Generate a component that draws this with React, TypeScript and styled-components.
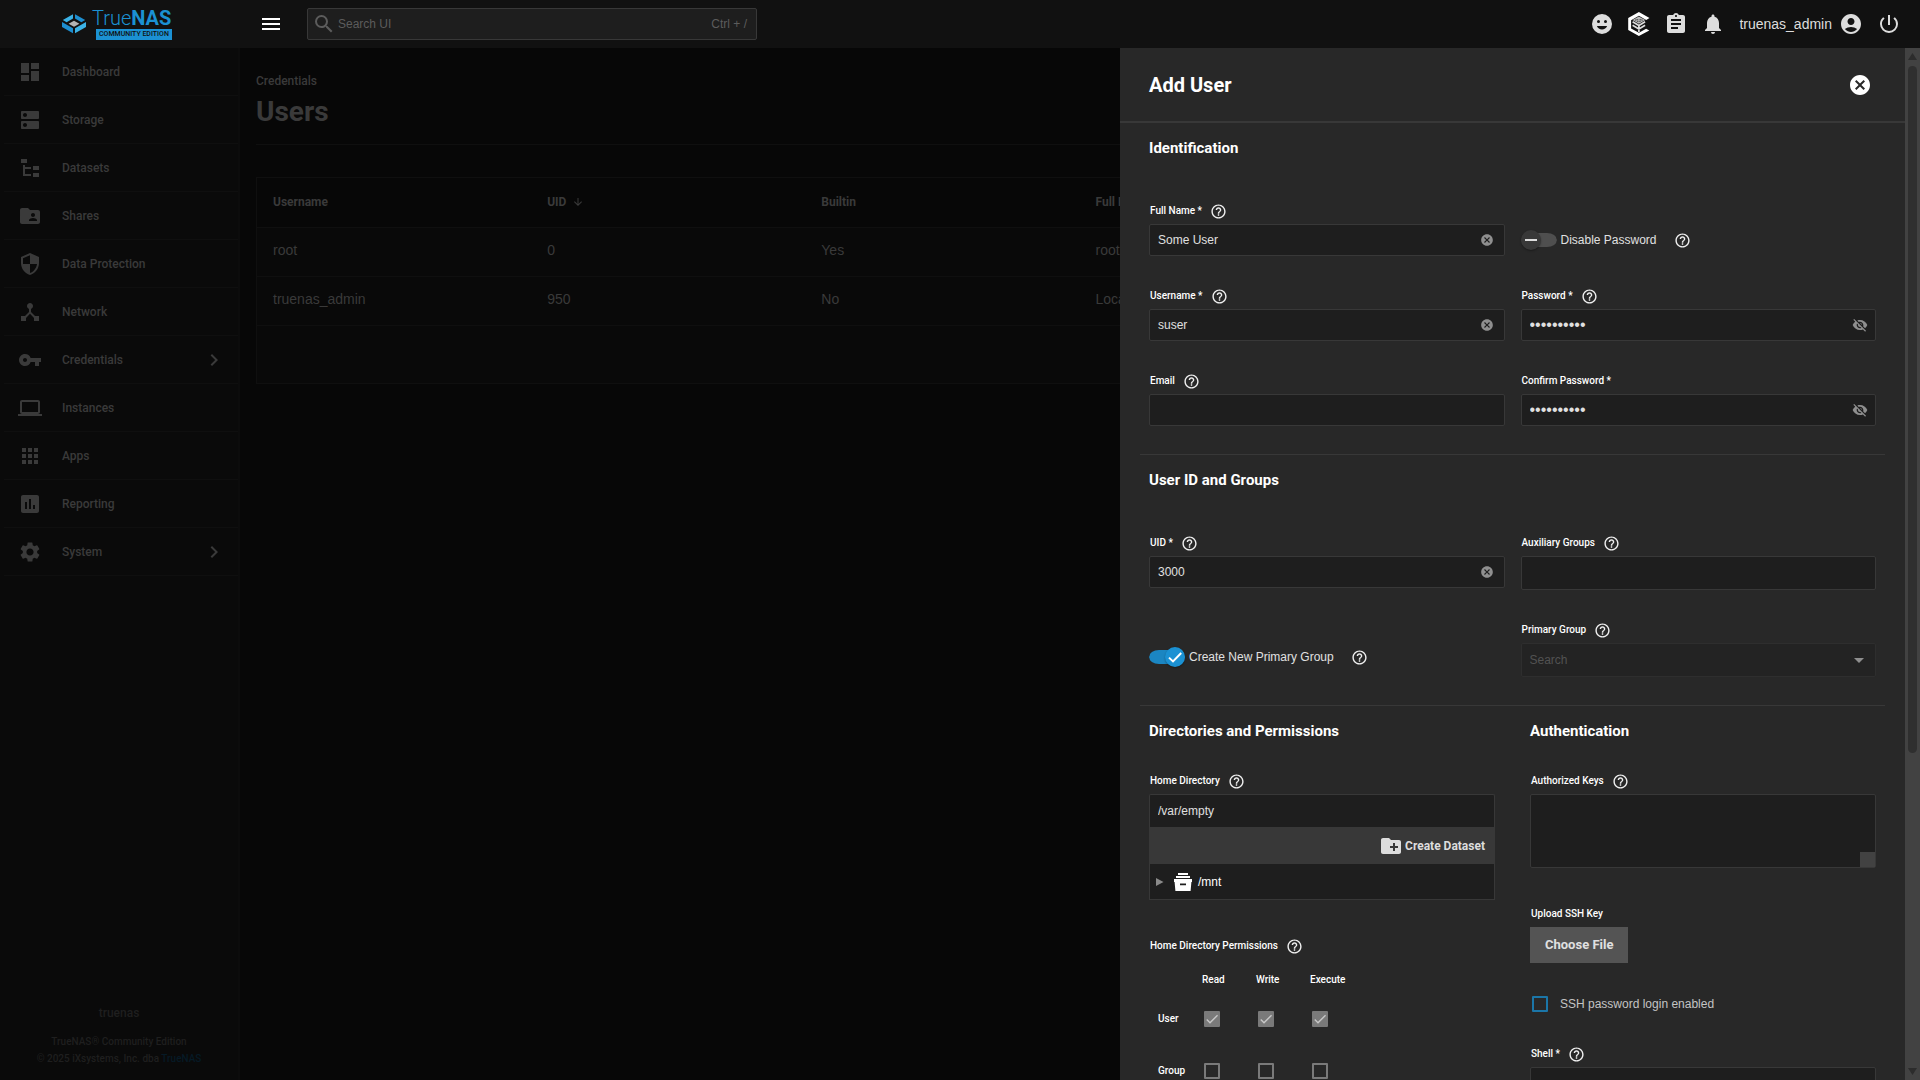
import React, { useState } from 'react';
import styled, { createGlobalStyle } from 'styled-components';
import {
  MdAccountCircle,
  MdApps,
  MdArrowDownward,
  MdArrowDropDown,
  MdAssessment,
  MdAssignment,
  MdCancel,
  MdCheck,
  MdChevronRight,
  MdCreateNewFolder,
  MdDashboard,
  MdDeviceHub,
  MdDns,
  MdFolderShared,
  MdHelpOutline,
  MdLaptop,
  MdMenu,
  MdNotifications,
  MdPowerSettingsNew,
  MdSearch,
  MdSecurity,
  MdSettings,
  MdVisibilityOff,
  MdVpnKey,
} from 'react-icons/md';

const sans = '"Liberation Sans", Arial, sans-serif';
const heading = 'Roboto, "Liberation Sans", sans-serif';

const color = {
  topbar: '#111111',
  sidebar: '#0a0a0a',
  page: '#070707',
  dimLine: '#0f0f0f',
  dimText: '#3a3a3a',
  drawer: '#282828',
  field: '#1e1e1e',
  line: '#383838',
  text: '#e0e0e0',
  icon: '#dddddd',
  muted: '#8f8f8f',
  primary: '#1b91d3',
  scroll: '#424242',
};

const GlobalStyle = createGlobalStyle`
  *, *::before, *::after { box-sizing: border-box; }
  body {
    margin: 0;
    background: ${color.page};
    color: ${color.text};
    font: 12px/16px ${sans};
    overflow: hidden;
  }
  button, input, select, textarea { font: inherit; color: inherit; }
`;

/* ---------- shell ---------- */

const Shell = styled.div`
  display: flex;
  flex-direction: column;
  height: 100vh;
`;

const TopBar = styled.header`
  display: flex;
  align-items: center;
  flex: none;
  height: 48px;
  background: ${color.topbar};
`;

const Brand = styled.a`
  display: flex;
  align-items: center;
  gap: 6px;
  width: 240px;
  padding-left: 62px;
  color: ${color.primary};
  text-decoration: none;
`;

const BrandText = styled.span`
  display: flex;
  flex-direction: column;
`;

const BrandName = styled.span`
  font: 300 20px/20px ${heading};
  b { font-weight: 700; }
`;

const BrandEdition = styled.span`
  margin: 1px 0 0 4px;
  padding: 0 3px;
  background: ${color.primary};
  color: ${color.topbar};
  font: 500 7px/11px ${heading};
  text-align: center;
  white-space: nowrap;
`;

const IconButton = styled.button<{ $color?: string }>`
  display: flex;
  padding: 0;
  border: 0;
  background: none;
  color: ${(p) => p.$color ?? color.icon};
  cursor: pointer;
`;

const SearchBox = styled.label`
  display: flex;
  align-items: center;
  gap: 2px;
  width: 450px;
  height: 32px;
  margin-left: 24px;
  padding: 0 9px 0 4px;
  border: 1px solid #383838;
  border-radius: 2px;
  background: ${color.field};
  color: #5c5c5c;
`;

const SearchInput = styled.input`
  flex: 1;
  min-width: 0;
  border: 0;
  outline: 0;
  background: none;
  padding: 0;
  &::placeholder { color: #5c5c5c; opacity: 1; }
`;

const MenuToggle = styled(IconButton)`
  margin-left: 19px;
`;

const TopActions = styled.div`
  display: flex;
  align-items: center;
  gap: 14px;
  margin-left: auto;
  padding-right: 19px;
`;

const IconGroup = styled.div`
  display: flex;
  gap: 13px;
`;

const AccountButton = styled(IconButton)`
  align-items: center;
  gap: 7px;
  font-size: 14px;
`;

const Body = styled.div`
  display: flex;
  flex: 1;
  min-height: 0;
`;

/* ---------- sidebar ---------- */

const Sidebar = styled.aside`
  display: flex;
  flex-direction: column;
  justify-content: space-between;
  flex: none;
  width: 240px;
  border-right: 2px solid #0c0c0c;
  background: ${color.sidebar};
`;

const NavList = styled.ul`
  margin: 0;
  padding: 0 0 0 4px;
  list-style: none;
`;

const NavLink = styled.a`
  display: flex;
  align-items: center;
  gap: 20px;
  height: 48px;
  padding: 0 12px 0 14px;
  border-bottom: 1px solid ${color.dimLine};
  color: ${color.dimText};
  font-family: ${heading};
  font-weight: 500;
  text-decoration: none;
`;

const NavLabel = styled.span`
  flex: 1;
`;

const SidebarFooter = styled.footer`
  padding-bottom: 13px;
  color: #1f1f1f;
  font: 500 10px/17px ${heading};
  text-align: center;
`;

const HostName = styled.div`
  margin-bottom: 11px;
  font-size: 12px;
`;

const VendorLink = styled.a`
  color: #061a26;
  text-decoration: none;
`;

/* ---------- users page ---------- */

const Main = styled.main`
  flex: 1;
  min-width: 0;
  padding: 24px 17px 0 16px;
  color: ${color.dimText};
`;

const Crumb = styled.div`
  font: 500 12px/18px ${heading};
`;

const PageTitle = styled.h1`
  margin: 5px 0 0;
  font: 700 28px/34px ${heading};
`;

const PageHead = styled.div`
  height: 72px;
`;

const Rule = styled.hr`
  height: 1px;
  margin: 0 0 32px;
  border: 0;
  background: ${color.dimLine};
`;

const UsersCard = styled.section`
  border: 1px solid ${color.dimLine};
  background: #090909;
`;

const UsersTable = styled.table`
  width: 100%;
  table-layout: fixed;
  border-collapse: collapse;
  font-size: 14px;
  text-align: left;

  th, td {
    height: 49px;
    padding: 0 16px;
    border-bottom: 1px solid ${color.dimLine};
  }
  tbody td { padding-bottom: 4px; }
  th {
    background: ${color.page};
    font: 700 12px/16px ${heading};
  }
`;

const SortLabel = styled.span`
  display: inline-flex;
  align-items: center;
  gap: 6px;
`;

const TableFooter = styled.div`
  height: 57px;
`;

/* ---------- drawer ---------- */

const Drawer = styled.section`
  position: fixed;
  top: 48px;
  right: 0;
  bottom: 0;
  display: flex;
  width: 800px;
  max-width: 100vw;
  background: ${color.drawer};
`;

const DrawerContent = styled.div`
  flex: 1;
  min-width: 0;
  overflow-y: auto;
  scrollbar-width: none;
`;

const DrawerHeader = styled.header`
  display: flex;
  align-items: center;
  justify-content: space-between;
  height: 75px;
  padding: 0 33px 0 29px;
  border-bottom: 2px solid ${color.line};
`;

const DrawerTitle = styled.h2`
  margin: 0;
  color: #ffffff;
  font: 700 20px/26px ${heading};
`;

const ScrollTrack = styled.div`
  display: flex;
  flex-direction: column;
  align-items: center;
  width: 15px;
  padding: 5px 0;
  background: ${color.scroll};
`;

const ScrollArrow = styled.span<{ $down?: boolean }>`
  width: 9px;
  height: 7px;
  background: #2c2c2c;
  clip-path: ${(p) => (p.$down ? 'polygon(0 0, 100% 0, 50% 100%)' : 'polygon(50% 0, 100% 100%, 0 100%)')};
`;

const ScrollRail = styled.div`
  flex: 1;
  margin: 6px 0;
`;

const ScrollThumb = styled.div`
  width: 9px;
  height: 69%;
  border-radius: 5px;
  background: #2f2f2f;
`;

const Form = styled.form`
  padding: 0 20px;
`;

const Section = styled.div`
  padding: 15px 9px 28px;
  & + & { border-top: 1px solid ${color.line}; }
`;

const SectionTitle = styled.h3<{ $tight?: boolean }>`
  margin: 0 0 ${(p) => (p.$tight ? 31 : 44)}px;
  color: #ffffff;
  font: 700 15px/20px ${heading};
`;

const Columns = styled.div<{ $gap: number }>`
  display: flex;
  gap: ${(p) => p.$gap}px;
`;

const Column = styled.div`
  flex: 1 1 0;
  min-width: 0;
`;

const Stack = styled(Column)`
  display: flex;
  flex-direction: column;
  gap: 31px;
`;

const FieldBox = styled.div<{ $spaced?: boolean }>`
  padding-bottom: ${(p) => (p.$spaced ? 6 : 0)}px;
`;

const LabelRow = styled.div`
  display: flex;
  align-items: center;
  gap: 8px;
  height: 18px;
  margin-bottom: 4px;
  padding-left: 1px;
  color: #ffffff;
  font: 500 10px/14px ${heading};
`;

const InputFrame = styled.div<{ $tall?: boolean; $disabled?: boolean; $end: number }>`
  display: flex;
  align-items: center;
  height: ${(p) => (p.$tall ? 34 : 32)}px;
  padding: 0 ${(p) => p.$end}px 0 8px;
  border: 1px solid ${(p) => (p.$disabled ? '#2e2e2e' : color.line)};
  border-radius: 2px;
  background: ${(p) => (p.$disabled ? '#232323' : color.field)};
`;

const TextInput = styled.input`
  flex: 1;
  min-width: 0;
  padding: 0;
  border: 0;
  outline: 0;
  background: none;
  &[type='password'] { font-size: 16px; }
  &::placeholder { color: #525252; opacity: 1; }
`;

const SelectInput = styled.select`
  flex: 1;
  height: 100%;
  border: 0;
  outline: 0;
  appearance: none;
  background: none;
`;

const TextArea = styled.textarea`
  display: block;
  width: 100%;
  height: 74px;
  padding: 8px;
  border: 1px solid ${color.line};
  border-radius: 2px;
  outline: 0;
  resize: none;
  background: ${color.field};
`;

const TextAreaWrap = styled.div`
  position: relative;
`;

const ResizeCorner = styled.span`
  position: absolute;
  right: 1px;
  bottom: 1px;
  width: 15px;
  height: 15px;
  background: ${color.scroll};
`;

const SwitchRow = styled.div`
  display: flex;
  align-items: center;
  gap: 17px;
  height: 54px;
  padding-top: 28px;
  padding-bottom: 6px;
`;

const SwitchLabel = styled.label`
  display: flex;
  align-items: center;
  gap: 4px;
`;

const Overlaid = styled.span`
  display: inline-grid;
  flex: none;
  align-items: center;
  > * { grid-area: 1 / 1; }
  > svg { pointer-events: none; }
`;

const SwitchInput = styled.input`
  appearance: none;
  display: flex;
  align-items: center;
  width: 36px;
  height: 20px;
  margin: 0;
  border: 3px solid transparent;
  border-width: 3px 0;
  border-radius: 10px;
  background: #4f4f4f padding-box;
  cursor: pointer;

  &::before {
    content: '';
    flex: none;
    width: 20px;
    height: 20px;
    border-radius: 50%;
    background: #383838;
    box-shadow: 0 1px 2px rgba(0, 0, 0, 0.35);
  }
  &:checked {
    justify-content: flex-end;
    background: #1b86c2 padding-box;
  }
  &:checked::before { background: ${color.primary}; }
  & + svg { margin: 0 2px; }
  &:checked + svg { justify-self: end; }
`;

const CheckInput = styled.input<{ $accent?: boolean }>`
  appearance: none;
  width: 16px;
  height: 16px;
  margin: 0;
  border: 2px solid ${(p) => (p.$accent ? '#1b76a8' : '#7a7a7a')};
  border-radius: 1px;
  &:checked { background: #7a7a7a; }
`;

const PathInput = styled.input`
  display: block;
  width: 100%;
  height: 33px;
  padding: 0 8px;
  border: 1px solid ${color.line};
  border-bottom: 0;
  border-radius: 2px 2px 0 0;
  outline: 0;
  background: ${color.field};
`;

const ExplorerBar = styled.div`
  display: flex;
  align-items: center;
  justify-content: flex-end;
  height: 37px;
  padding: 1px 10px 0 0;
  background: ${color.line};
`;

const CreateButton = styled(IconButton)`
  align-items: center;
  gap: 2px;
  font: 700 12px/16px ${heading};
`;

const TreeRow = styled.div`
  display: flex;
  align-items: center;
  height: 36px;
  padding-left: 6px;
  border: 1px solid ${color.line};
  border-top: 0;
  background: ${color.field};
  color: #ffffff;
`;

const TreeIcon = styled.span`
  display: flex;
  margin: 0 6px 0 10px;
`;

const PermTable = styled.table`
  width: 215px;
  table-layout: fixed;
  border-collapse: collapse;
  color: #ffffff;
  font: 500 10px/14px ${heading};
  text-align: left;

  th, td {
    padding: 0;
    font-weight: 500;
  }
  thead th { height: 34px; padding-top: 8px; }
  tbody th, tbody td { height: 52px; }
  tbody th { padding-left: 9px; }
  td > span { margin-left: 2px; vertical-align: middle; }
  col:first-child { width: 53px; }
`;

const FileButton = styled.button`
  height: 36px;
  padding: 0 15px;
  border: 0;
  background: #545454;
  color: ${color.text};
  font: 700 13px/18px ${heading};
`;

const CheckLabel = styled.label`
  display: flex;
  align-items: center;
  gap: 12px;
  height: 20px;
  padding-left: 2px;
  color: #c4c4c4;
`;

/* ---------- drawings ---------- */

const TrueNasMark = () => (
  <svg width="24" height="20" viewBox="0 0 24 20" aria-hidden="true">
    <path d="M.8 6 11 .2v4.2L4.6 8.2zM13 14.2 24 8v5L13 19.2z" fill="#3bb2e6" />
    <path d="M23.2 6 13 .2v4.2l6.4 3.8zM11 14.2 0 8v5l11 6.2z" fill="#1d8ed0" />
    <path d="m6.6 9.8 5.4-3 5.4 3-5.4 3z" fill="#b4b4b4" />
  </svg>
);

const TrueCommandMark = () => (
  <svg width="24" height="24" viewBox="0 0 24 24" fill="none" aria-hidden="true">
    <path
      d="M11.9 0 22.5 6l-3.3 1.9-7.3-4.1-7.8 4.4v8.2l7.8 4.4 7.2-4 3.2 1.7L11.9 24 1.2 18V6z"
      fill="#ffffff"
    />
    <path d="m11.9 5.2 5.2 2.9-5.2 3-5.2-3zM11.9 5.2v5.9M9 8.1h5.8" stroke="#b8b8b8" strokeWidth="1.2" />
    <path d="M5.6 9.8l6.3 3.7 6.2-3.7M5.6 13.2l6.3 3.7 6.2-3.7M11.9 13v7" stroke="#dddddd" strokeWidth="1.7" />
  </svg>
);

const SmileIcon = () => (
  <svg width="24" height="24" viewBox="0 0 24 24" fill="currentColor" fillRule="evenodd" aria-hidden="true">
    <path d="M12 2a10 10 0 1 0 0 20 10 10 0 0 0 0-20zM15.5 8a1.5 1.5 0 1 1 0 3 1.5 1.5 0 0 1 0-3zM8.5 8a1.5 1.5 0 1 1 0 3 1.5 1.5 0 0 1 0-3zM12 17.5c-2.33 0-4.31-1.46-5.11-3.5h10.22c-.8 2.04-2.78 3.5-5.11 3.5z" />
  </svg>
);

const FileTreeIcon = () => (
  <svg width="24" height="24" viewBox="0 0 24 24" fill="currentColor" aria-hidden="true">
    <path d="M3 3h6v4H3zM15 10h6v4h-6zM15 17h6v4h-6zM13 13H7v5h6v2H5V9h2v2h6z" />
  </svg>
);

const DatasetIcon = () => (
  <svg width="18" height="18" viewBox="0 0 18 18" fill="#ffffff" fillRule="evenodd" aria-hidden="true">
    <path d="M4 0h10v2H4zM2 3h14v2H2zM0 6h18v3h-.6L16.6 18H1.4L.6 9H0zM6 10.6v1.7h6v-1.7z" />
  </svg>
);

const ExpandIcon = () => (
  <svg width="8" height="8" viewBox="0 0 8 8" aria-hidden="true">
    <path d="M0 0 7.5 4 0 8z" fill="#8a8a8a" />
  </svg>
);

const SwitchGlyph = ({ on }: { on: boolean }) => (
  <svg width="16" height="16" viewBox="0 0 16 16" fill="none" aria-hidden="true">
    <path d={on ? 'M2 8.6 6 12.4 14.2 4' : 'M2 8h12'} stroke={on ? '#ffffff' : '#dddddd'} strokeWidth="2" />
  </svg>
);

/* ---------- parts ---------- */

const Help = ({ about }: { about: string }) => (
  <IconButton type="button" aria-label={`Help: ${about}`} $color="#f0f0f0">
    <MdHelpOutline size={17} />
  </IconButton>
);

type FieldProps = {
  id: string;
  label: string;
  required?: boolean;
  help?: boolean;
  spaced?: boolean;
  children: React.ReactNode;
};

const Field = ({ id, label, required, help, spaced, children }: FieldProps) => (
  <FieldBox $spaced={spaced}>
    <LabelRow>
      <label htmlFor={id}>{required ? `${label} *` : label}</label>
      {help && <Help about={label} />}
    </LabelRow>
    {children}
  </FieldBox>
);

const ClearableInput = ({ id, initial }: { id: string; initial: string }) => {
  const [value, setValue] = useState(initial);
  return (
    <InputFrame $end={10}>
      <TextInput id={id} value={value} onChange={(e) => setValue(e.target.value)} />
      {value && (
        <IconButton type="button" aria-label="Clear" $color={color.muted} onClick={() => setValue('')}>
          <MdCancel size={14} />
        </IconButton>
      )}
    </InputFrame>
  );
};

const PasswordInput = ({ id }: { id: string }) => (
  <InputFrame $end={7}>
    <TextInput id={id} type="password" defaultValue="abcdefghij" />
    <IconButton type="button" aria-label="Show password" $color={color.muted}>
      <MdVisibilityOff size={16} />
    </IconButton>
  </InputFrame>
);

const SwitchField = ({ label, initial }: { label: string; initial: boolean }) => {
  const [on, setOn] = useState(initial);
  return (
    <SwitchRow>
      <SwitchLabel>
        <Overlaid>
          <SwitchInput type="checkbox" role="switch" checked={on} onChange={() => setOn(!on)} />
          <SwitchGlyph on={on} />
        </Overlaid>
        {label}
      </SwitchLabel>
      <Help about={label} />
    </SwitchRow>
  );
};

const navItems = [
  { label: 'Dashboard', icon: <MdDashboard size={24} /> },
  { label: 'Storage', icon: <MdDns size={24} /> },
  { label: 'Datasets', icon: <FileTreeIcon /> },
  { label: 'Shares', icon: <MdFolderShared size={24} /> },
  { label: 'Data Protection', icon: <MdSecurity size={24} /> },
  { label: 'Network', icon: <MdDeviceHub size={24} /> },
  { label: 'Credentials', icon: <MdVpnKey size={24} />, nested: true },
  { label: 'Instances', icon: <MdLaptop size={24} /> },
  { label: 'Apps', icon: <MdApps size={24} /> },
  { label: 'Reporting', icon: <MdAssessment size={24} /> },
  { label: 'System', icon: <MdSettings size={24} />, nested: true },
];

const users = [
  { name: 'root', uid: 0, builtin: 'Yes', fullName: 'root' },
  { name: 'truenas_admin', uid: 950, builtin: 'No', fullName: 'Local Administrator' },
];

const modes = ['Read', 'Write', 'Execute'];
const permissions = [
  { who: 'User', granted: true },
  { who: 'Group', granted: false },
];

const Header = () => (
  <TopBar>
    <Brand href="#" aria-label="TrueNAS Community Edition">
      <TrueNasMark />
      <BrandText>
        <BrandName>True<b>NAS</b></BrandName>
        <BrandEdition>COMMUNITY EDITION</BrandEdition>
      </BrandText>
    </Brand>
    <MenuToggle type="button" aria-label="Toggle menu" $color="#ffffff"><MdMenu size={24} /></MenuToggle>
    <SearchBox>
      <MdSearch size={24} />
      <SearchInput placeholder="Search UI" aria-label="Search UI" />
      <span>Ctrl + /</span>
    </SearchBox>
    <TopActions>
      <IconGroup>
        <IconButton type="button" aria-label="Feedback"><SmileIcon /></IconButton>
        <IconButton type="button" aria-label="TrueCommand"><TrueCommandMark /></IconButton>
        <IconButton type="button" aria-label="Jobs"><MdAssignment size={24} /></IconButton>
        <IconButton type="button" aria-label="Alerts"><MdNotifications size={24} /></IconButton>
      </IconGroup>
      <AccountButton type="button">truenas_admin<MdAccountCircle size={24} /></AccountButton>
      <IconButton type="button" aria-label="Power"><MdPowerSettingsNew size={24} /></IconButton>
    </TopActions>
  </TopBar>
);

const Navigation = () => (
  <Sidebar>
    <nav>
      <NavList>
        {navItems.map((item) => (
          <li key={item.label}>
            <NavLink href="#">
              {item.icon}
              <NavLabel>{item.label}</NavLabel>
              {item.nested && <MdChevronRight size={24} />}
            </NavLink>
          </li>
        ))}
      </NavList>
    </nav>
    <SidebarFooter>
      <HostName>truenas</HostName>
      <div>TrueNAS® Community Edition</div>
      <div>© 2025 iXsystems, Inc. dba <VendorLink href="#">TrueNAS</VendorLink></div>
    </SidebarFooter>
  </Sidebar>
);

const UsersPage = () => (
  <Main>
    <PageHead>
      <Crumb>Credentials</Crumb>
      <PageTitle>Users</PageTitle>
    </PageHead>
    <Rule />
    <UsersCard>
      <UsersTable>
        <thead>
          <tr>
            <th>Username</th>
            <th><SortLabel>UID <MdArrowDownward size={12} /></SortLabel></th>
            <th>Builtin</th>
            <th>Full Name</th>
            <th colSpan={2} />
          </tr>
        </thead>
        <tbody>
          {users.map((user) => (
            <tr key={user.uid}>
              <td>{user.name}</td>
              <td>{user.uid}</td>
              <td>{user.builtin}</td>
              <td>{user.fullName}</td>
              <td colSpan={2} />
            </tr>
          ))}
        </tbody>
      </UsersTable>
      <TableFooter />
    </UsersCard>
  </Main>
);

const PermissionsGrid = () => (
  <PermTable id="home-permissions">
    <colgroup>
      <col />
      {modes.map((mode) => <col key={mode} />)}
    </colgroup>
    <thead>
      <tr>
        <td />
        {modes.map((mode) => <th key={mode} scope="col">{mode}</th>)}
      </tr>
    </thead>
    <tbody>
      {permissions.map(({ who, granted }) => (
        <tr key={who}>
          <th scope="row">{who}</th>
          {modes.map((mode) => (
            <td key={mode}>
              <Overlaid>
                <CheckInput type="checkbox" disabled defaultChecked={granted} aria-label={`${who} ${mode}`} />
                {granted && <MdCheck size={16} color="#c8c8c8" />}
              </Overlaid>
            </td>
          ))}
        </tr>
      ))}
    </tbody>
  </PermTable>
);

const AddUser = () => (
  <Drawer role="dialog" aria-labelledby="drawer-title">
    <DrawerContent>
      <DrawerHeader>
        <DrawerTitle id="drawer-title">Add User</DrawerTitle>
        <IconButton type="button" aria-label="Close" $color="#ffffff"><MdCancel size={24} /></IconButton>
      </DrawerHeader>
      <Form>
        <Section>
          <SectionTitle>Identification</SectionTitle>
          <Columns $gap={16}>
            <Stack>
              <Field id="full-name" label="Full Name" required help>
                <ClearableInput id="full-name" initial="Some User" />
              </Field>
              <Field id="username" label="Username" required help>
                <ClearableInput id="username" initial="suser" />
              </Field>
              <Field id="email" label="Email" help>
                <ClearableInput id="email" initial="" />
              </Field>
            </Stack>
            <Stack>
              <SwitchField label="Disable Password" initial={false} />
              <Field id="password" label="Password" required help>
                <PasswordInput id="password" />
              </Field>
              <Field id="confirm" label="Confirm Password" required>
                <PasswordInput id="confirm" />
              </Field>
            </Stack>
          </Columns>
        </Section>

        <Section>
          <SectionTitle>User ID and Groups</SectionTitle>
          <Columns $gap={16}>
            <Stack>
              <Field id="uid" label="UID" required help>
                <ClearableInput id="uid" initial="3000" />
              </Field>
              <SwitchField label="Create New Primary Group" initial />
            </Stack>
            <Stack>
              <Field id="aux-groups" label="Auxiliary Groups" help>
                <InputFrame $tall $end={8}><TextInput id="aux-groups" /></InputFrame>
              </Field>
              <Field id="primary-group" label="Primary Group" help>
                <InputFrame $tall $disabled $end={4}>
                  <TextInput id="primary-group" placeholder="Search" disabled />
                  <MdArrowDropDown size={24} color={color.muted} />
                </InputFrame>
              </Field>
            </Stack>
          </Columns>
        </Section>

        <Section>
          <Columns $gap={35}>
            <Column>
              <SectionTitle $tight>Directories and Permissions</SectionTitle>
              <Stack>
                <Field id="home" label="Home Directory" help spaced>
                  <PathInput id="home" defaultValue="/var/empty" />
                  <ExplorerBar>
                    <CreateButton type="button"><MdCreateNewFolder size={24} />Create Dataset</CreateButton>
                  </ExplorerBar>
                  <TreeRow>
                    <IconButton type="button" aria-label="Expand /mnt"><ExpandIcon /></IconButton>
                    <TreeIcon><DatasetIcon /></TreeIcon>
                    /mnt
                  </TreeRow>
                </Field>
                <Field id="home-permissions" label="Home Directory Permissions" help>
                  <PermissionsGrid />
                </Field>
              </Stack>
            </Column>
            <Column>
              <SectionTitle $tight>Authentication</SectionTitle>
              <Stack>
                <Field id="keys" label="Authorized Keys" help spaced>
                  <TextAreaWrap>
                    <TextArea id="keys" />
                    <ResizeCorner />
                  </TextAreaWrap>
                </Field>
                <Field id="ssh-key" label="Upload SSH Key">
                  <FileButton id="ssh-key" type="button">Choose File</FileButton>
                </Field>
                <CheckLabel>
                  <CheckInput type="checkbox" $accent />
                  SSH password login enabled
                </CheckLabel>
                <Field id="shell" label="Shell" required help>
                  <InputFrame $tall $end={4}>
                    <SelectInput id="shell" />
                    <MdArrowDropDown size={24} color={color.muted} />
                  </InputFrame>
                </Field>
              </Stack>
            </Column>
          </Columns>
        </Section>
      </Form>
    </DrawerContent>
    <ScrollTrack aria-hidden="true">
      <ScrollArrow />
      <ScrollRail><ScrollThumb /></ScrollRail>
      <ScrollArrow $down />
    </ScrollTrack>
  </Drawer>
);

export default function App() {
  return (
    <>
      <GlobalStyle />
      <Shell>
        <Header />
        <Body>
          <Navigation />
          <UsersPage />
        </Body>
      </Shell>
      <AddUser />
    </>
  );
}
